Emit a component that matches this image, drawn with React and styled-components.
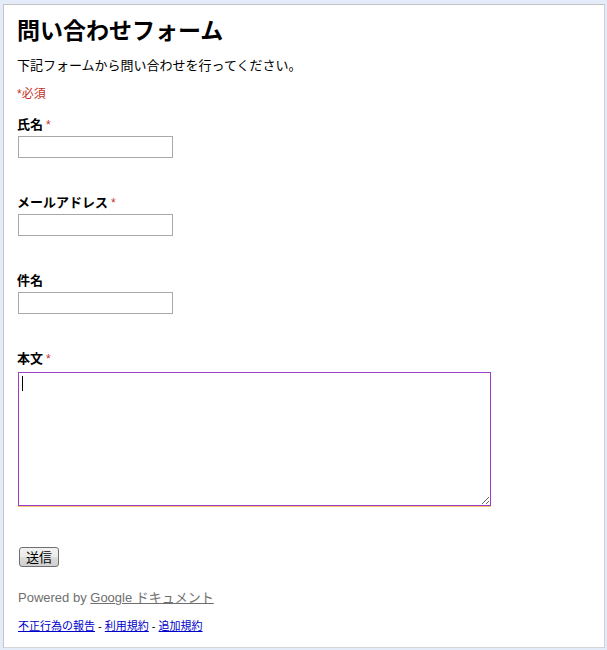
import React from "react";
import styled, { createGlobalStyle } from "styled-components";

const Global = createGlobalStyle`
  html, body { margin: 0; padding: 0; background: #e5ecf9; }
  body { font-family: "Liberation Sans", Arial, "Noto Sans CJK JP", sans-serif; color: #000; }
`;

const Page = styled.div`
  padding: 4px 3px 2px 3px;
  height: 650px;
  box-sizing: border-box;
`;

const Panel = styled.div`
  width: 602px;
  height: 644px;
  box-sizing: border-box;
  background: #fff;
  border: 1px solid #c4c4c4;
  border-right-color: #d0d0d0;
  border-bottom-color: #d4d4d4;
  padding: 13px 13px 0 13px;
  display: flex;
  flex-direction: column;
`;

const Title = styled.h1`
  margin: 0;
  font-size: 23px;
  line-height: 26px;
  font-weight: bold;
`;

const Desc = styled.p`
  margin: 13px 0 0 0;
  font-size: 13px;
  line-height: 18px;
`;

const Required = styled.div`
  margin-top: 10px;
  font-size: 12px;
  line-height: 18px;
  color: #c4331f;
`;

const Form = styled.form`
  margin-top: 13px;
  display: flex;
  flex-direction: column;
`;

const Field = styled.div`
  display: flex;
  flex-direction: column;
  align-items: flex-start;
  margin-bottom: ${(p) => p.$gap}px;
`;

const Label = styled.label`
  font-size: 13px;
  line-height: 18px;
  font-weight: bold;
  height: 18px;
`;

const Star = styled.span`
  color: #c4331f;
  font-weight: normal;
  font-size: 12px;
  margin-left: 3px;
`;

const Input = styled.input`
  margin: 2px 0 0 1px;
  width: 155px;
  height: 22px;
  box-sizing: border-box;
  border: 1px solid #a9a9a9;
  padding: 1px 2px;
  font-size: 13px;
  background: #fff;
  outline: none;
`;

const AreaWrap = styled.div`
  position: relative;
  margin: 4px 0 0 1px;
`;

const TextArea = styled.textarea`
  display: block;
  margin: 0;
  width: 473px;
  height: 134px;
  box-sizing: border-box;
  border: 1px solid #9b3fc9;
  box-shadow: 0 1px 0 #f3c26a;
  padding: 2px;
  font-size: 13px;
  font-family: inherit;
  outline: none;
  resize: both;
`;

const Caret = styled.span`
  position: absolute;
  left: 4px;
  top: 4px;
  width: 1px;
  height: 15px;
  background: #000;
`;

const Button = styled.button`
  margin: 0 0 0 2px;
  width: 40px;
  height: 20px;
  padding: 0;
  font-size: 13px;
  font-family: "Noto Sans CJK JP", sans-serif;
  line-height: 16px;
  border: 1px solid #707070;
  border-radius: 3px;
  background: linear-gradient(#f2f2f2, #ebebeb 50%, #dddddd 51%, #cfcfcf);
  color: #000;
`;

const Powered = styled.div`
  margin-top: 22px;
  margin-left: 1px;
  font-size: 13px;
  line-height: 18px;
  color: #6f6f6f;
`;

const PoweredLink = styled.a`
  color: #6f6f6f;
  text-decoration: underline;
`;

const Links = styled.div`
  margin-top: 10px;
  margin-left: 1px;
  font-size: 11px;
  line-height: 18px;
  color: #000;
`;

const Link = styled.a`
  color: #0000cc;
  text-decoration: underline;
`;

export default function App() {
  return (
    <>
      <Global />
      <Page>
        <Panel>
          <Title>問い合わせフォーム</Title>
          <Desc>下記フォームから問い合わせを行ってください。</Desc>
          <Required>*必須</Required>
          <Form onSubmit={(e) => e.preventDefault()}>
            <Field $gap={36}>
              <Label>
                氏名<Star>*</Star>
              </Label>
              <Input type="text" />
            </Field>
            <Field $gap={36}>
              <Label>
                メールアドレス<Star>*</Star>
              </Label>
              <Input type="text" />
            </Field>
            <Field $gap={36}>
              <Label>件名</Label>
              <Input type="text" />
            </Field>
            <Field $gap={41}>
              <Label>
                本文<Star>*</Star>
              </Label>
              <AreaWrap>
                <TextArea />
                <Caret />
              </AreaWrap>
            </Field>
            <Field $gap={0}>
              <Button type="submit">送信</Button>
            </Field>
          </Form>
          <Powered>
            Powered by <PoweredLink href="#">Google ドキュメント</PoweredLink>
          </Powered>
          <Links>
            <Link href="#">不正行為の報告</Link> - <Link href="#">利用規約</Link> -{" "}
            <Link href="#">追加規約</Link>
          </Links>
        </Panel>
      </Page>
    </>
  );
}
